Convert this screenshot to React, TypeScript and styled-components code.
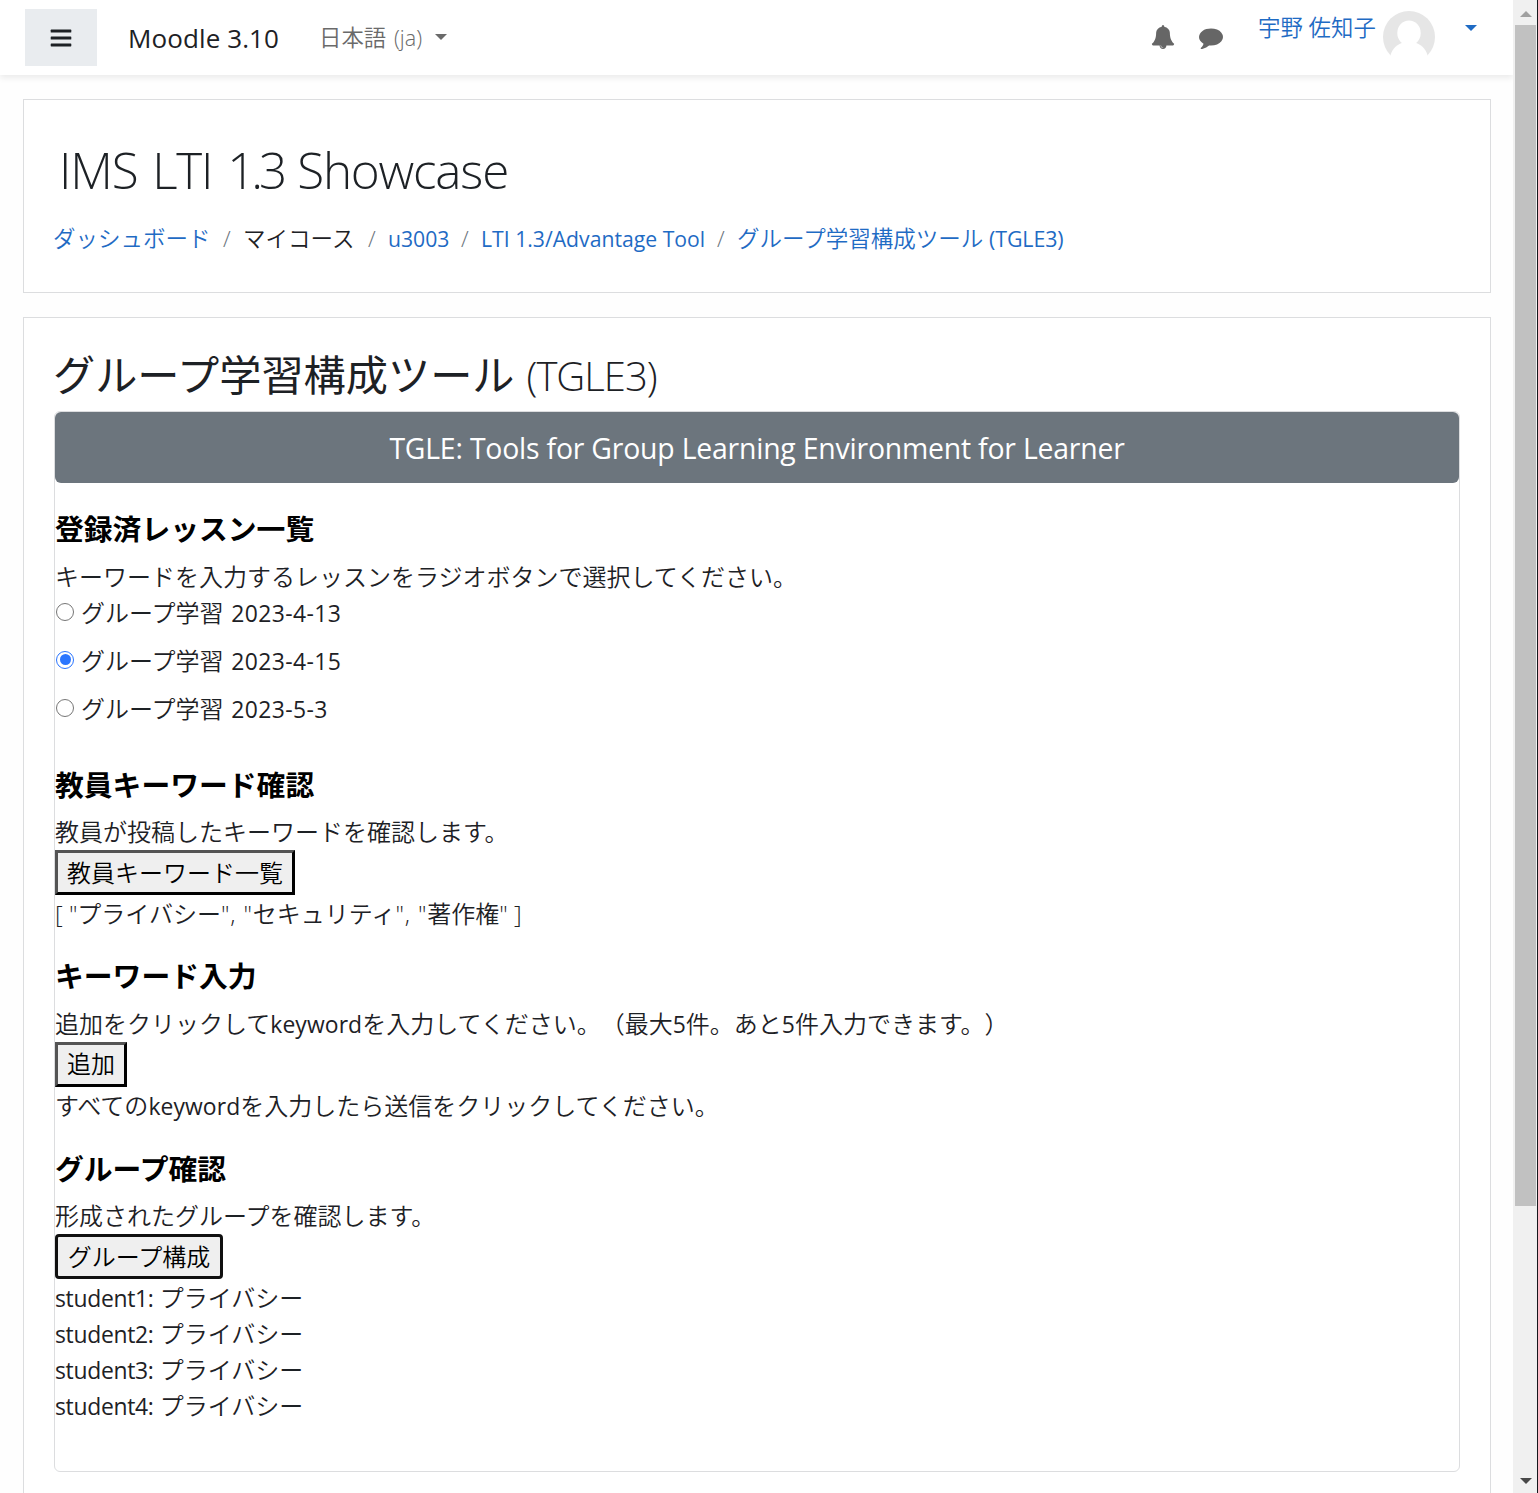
import React from "react";
import styled, { createGlobalStyle } from "styled-components";

const GlobalStyle = createGlobalStyle`
  * { box-sizing: border-box; }
  html, body { margin: 0; padding: 0; overflow: hidden; background: #fff; }
  body {
    font-family: "Open Sans", "Noto Sans CJK JP", sans-serif;
    font-size: 24px;
    font-weight: 350;
    line-height: 36px;
    color: #1d2125;
    text-spacing-trim: space-all;
  }
`;

const Window = styled.div`
  display: flex;
  width: 1538px;
  height: 1493px;
  overflow: hidden;
`;

const Page = styled.div`
  display: flex;
  flex-direction: column;
  width: 1513px;
  height: 1493px;
  overflow: hidden;
  background: #fefefe;
`;

/* Latin runs sit slightly smaller than the Japanese glyphs around them. */
const Latin = styled.span<{ $size?: number; $track?: number; $weight?: number; $space?: number }>`
  font-size: ${(p) => p.$size ?? 22.9}px;
  letter-spacing: ${(p) => p.$track ?? 0}px;
  font-weight: ${(p) => p.$weight ?? 370};
  ${(p) => p.$space !== undefined && `word-spacing: ${p.$space}px;`}
`;

const Navbar = styled.header`
  display: flex;
  flex: none;
  align-items: flex-start;
  height: 75px;
  padding: 9px 36px 0 25px;
  background: #fff;
  box-shadow: 0 3px 6px rgba(0, 0, 0, 0.08);
`;

const DrawerButton = styled.button`
  display: flex;
  align-items: center;
  justify-content: center;
  width: 72px;
  height: 57px;
  padding: 0;
  border: 0;
  background: #e9ecef;
`;

const Brand = styled.a`
  width: 191px;
  margin-left: 31px;
  line-height: 58px;
  white-space: nowrap;
`;

const Language = styled.a`
  display: flex;
  align-items: center;
  height: 58px;
  font-size: 22.4px;
  color: #6a6a6a;
  white-space: pre;
  word-spacing: 2px;
`;

const Caret = styled.span<{ $color: string }>`
  border: 6px solid transparent;
  border-top-color: ${(p) => p.$color};
  border-bottom: 0;
`;

const LanguageCaret = styled(Caret)`
  margin: -3px 0 0 13px;
`;

const NavRight = styled.div`
  display: flex;
  align-items: flex-start;
  margin-left: auto;
`;

const NavIcon = styled.svg`
  width: 24px;
  height: 24px;
  margin: 16px 24px 0 0;
  fill: #666;
`;

const UserMenu = styled.a`
  display: flex;
  align-items: flex-start;
  margin-left: 11px;
  font-size: 22.4px;
  color: #1f6bc4;
  white-space: nowrap;
`;

const UserName = styled.span`
  width: 118px;
  margin: 1px 7px 0 0;
`;

const Avatar = styled.svg`
  width: 52px;
  height: 52px;
  margin: 2px 30px 0 0;
`;

const UserCaret = styled(Caret)`
  margin-top: 16px;
`;

const Content = styled.main`
  display: flex;
  flex-direction: column;
  flex: 1;
  gap: 24px;
  padding: 24px 22px 0 23px;
`;

const HeaderCard = styled.section`
  flex: none;
  height: 194px;
  padding: 38px 29px 0;
  border: 1px solid #dcdddf;
  background: #fff;
`;

const CourseTitle = styled.h1`
  margin: 0 0 18px 6px;
  font-weight: 300;
  line-height: 64px;
`;

const Breadcrumb = styled.nav`
  display: flex;
  font-size: 22.5px;
  line-height: 36px;
  white-space: nowrap;
`;

const Crumb = styled.span<{ $link?: boolean; $width: number }>`
  width: ${(p) => p.$width}px;
  color: ${(p) => (p.$link ? "#1f6bc4" : "#1d2125")};
`;

const Divider = styled.span`
  width: 33px;
  padding-left: 13px;
  color: #6c757d;
`;

const ToolCard = styled.section`
  flex: none;
  height: 1240px;
  padding: 31px 30px 0;
  border: 1px solid #dcdddf;
  background: #fff;
`;

const ToolTitle = styled.h2`
  margin: 0 0 9px -1px;
  font-size: 42.2px;
  font-weight: 400;
  line-height: 52px;
  word-spacing: 1px;
  white-space: nowrap;
`;

const Frame = styled.div`
  height: 1061px;
  border: 1px solid #dcdddf;
  border-radius: 6px;
`;

const Banner = styled.div`
  height: 71px;
  border-radius: 6px;
  background: #6c757d;
  color: #fff;
  line-height: 72px;
  text-align: center;
`;

const Section = styled.section<{ $top: number }>`
  display: flex;
  flex-direction: column;
  align-items: flex-start;
  padding-top: ${(p) => p.$top}px;
  white-space: nowrap;
`;

const SectionTitle = styled.h3`
  margin: 0 0 12px;
  font-size: 28.8px;
  font-weight: 700;
  line-height: 34.5px;
  color: #000;
`;

const Line = styled.div`
  height: 36px;
`;

const RadioRow = styled.label`
  display: flex;
  align-items: center;
  height: 36px;
  margin-bottom: 12px;
  word-spacing: 1.5px;
  white-space: pre;
`;

const LessonName = styled.span`
  margin-top: 2px;
`;

const Radio = styled.input`
  appearance: none;
  display: grid;
  place-items: center;
  width: 18px;
  height: 18px;
  margin: 0 7px 2px 1px;
  border: 1.5px solid #767676;
  border-radius: 50%;
  background: #fff;

  &:checked {
    border-color: #2a75ff;
  }

  &:checked::before {
    content: "";
    width: 11px;
    height: 11px;
    border-radius: 50%;
    background: #2a75ff;
  }
`;

const ActionButton = styled.button<{ $focused?: boolean; $width: number }>`
  width: ${(p) => p.$width}px;
  height: 45px;
  margin-bottom: 1px;
  padding: 0;
  border: 3px ${(p) => (p.$focused ? "solid #101010" : "outset #000")};
  border-radius: ${(p) => (p.$focused ? 4 : 0)}px;
  background: #efefef;
  color: #000;
  font: inherit;
  white-space: nowrap;
`;

const Scrollbar = styled.aside`
  display: flex;
  flex-direction: column;
  align-items: center;
  justify-content: space-between;
  width: 25px;
  height: 1493px;
  padding: 11px 1px 9px 2px;
  border-right: 1px solid #15171c;
  background: #f0f0f0;
`;

const Thumb = styled.div`
  width: 21px;
  height: 1181px;
  margin: 8px 0 auto;
  background: #c1c1c1;
`;

const ArrowUp = styled.span`
  border: 6px solid transparent;
  border-top: 0;
  border-bottom-color: #a0a0a0;
`;

const ArrowDown = styled.span`
  border: 6px solid transparent;
  border-bottom: 0;
  border-top-color: #484848;
`;

const lessons = [
  { name: "グループ学習", date: "2023-4-13" },
  { name: "グループ学習", date: "2023-4-15" },
  { name: "グループ学習", date: "2023-5-3" },
];

const students = ["student1:", "student2:", "student3:", "student4:"];

export default function App() {
  const [selected, setSelected] = React.useState(1);

  return (
    <>
      <GlobalStyle />
      <Window>
        <Page>
          <Navbar>
            <DrawerButton aria-label="menu">
              <svg width="22" height="18" viewBox="0 0 22 18" fill="#1d2125">
                <rect x="0.7" y="0.6" width="20.6" height="3" rx="0.6" />
                <rect x="0.7" y="7.5" width="20.6" height="3" rx="0.6" />
                <rect x="0.7" y="14.4" width="20.6" height="3" rx="0.6" />
              </svg>
            </DrawerButton>
            <Brand>
              <Latin $size={26} $track={0.1}>Moodle 3.10</Latin>
            </Brand>
            <Language>
              日本語 <Latin $size={21.6} $weight={340}>(ja)</Latin>
              <LanguageCaret $color="#6a6a6a" />
            </Language>
            <NavRight>
              <NavIcon viewBox="0 0 1792 1792">
                <path d="M912 1696q0-16-16-16-59 0-101.5-42.5t-42.5-101.5q0-16-16-16t-16 16q0 73 51.5 124.5t124.5 51.5q16 0 16-16zm816-288q0 52-38 90t-90 38h-448q0 106-75 181t-181 75-181-75-75-181h-448q-52 0-90-38t-38-90q50-42 91-88t85-119.5 74.5-158.5 50-206 19.5-260q0-152 117-282.5t307-158.5q-8-19-8-39 0-40 28-68t68-28 68 28 28 68q0 20-8 39 190 28 307 158.5t117 282.5q0 139 19.5 260t50 206 74.5 158.5 85 119.5 91 88z" />
              </NavIcon>
              <NavIcon viewBox="0 0 1792 1792">
                <path d="M1792 896q0 174-120 321.5t-326 233-450 85.5q-70 0-145-8-198 175-460 242-49 14-114 22-17 2-30.5-9t-17.5-29v-1q-3-4-.5-12t2-10 4.5-9.5l6-9 7-8.5 8-9q7-8 31-34.5t34.5-38 31-39.5 32.5-51 27-59 26-76q-157-89-247.5-220t-90.5-281q0-130 71-248.5t191-204.5 286-136.5 348-50.5q244 0 450 85.5t326 233 120 321.5z" />
              </NavIcon>
              <UserMenu>
                <UserName>宇野 佐知子</UserName>
                <Avatar viewBox="0 0 52 52">
                  <circle cx="26" cy="26" r="26" fill="#e6e6e6" />
                  <ellipse cx="26" cy="22" rx="11.7" ry="12.6" fill="#fff" />
                  <path d="M7 46C9 37 15 32.5 21 31.5H31C37 32.5 43 37 45 46V52H7Z" fill="#fff" />
                  <rect y="45" width="52" height="7" fill="#fff" />
                </Avatar>
                <UserCaret $color="#1f6bc4" />
              </UserMenu>
            </NavRight>
          </Navbar>

          <Content>
            <HeaderCard>
              <CourseTitle>
                <Latin $size={49.4} $track={-1.2} $space={3.2} $weight={300}>IMS LTI </Latin>
                <Latin $size={49.4} $track={-4} $space={5} $weight={300}>1.3 </Latin>
                <Latin $size={49.4} $track={-1.2} $weight={300}>Showcase</Latin>
              </CourseTitle>
              <Breadcrumb>
                <Crumb $link $width={157}>ダッシュボード</Crumb>
                <Divider>/</Divider>
                <Crumb $width={112}>マイコース</Crumb>
                <Divider>/</Divider>
                <Crumb $link $width={60}><Latin $size={21.2}>u3003</Latin></Crumb>
                <Divider>/</Divider>
                <Crumb $link $width={223}><Latin $size={21.2}>LTI 1.3/Advantage Tool</Latin></Crumb>
                <Divider>/</Divider>
                <Crumb $link $width={330}>グループ学習構成ツール <Latin $size={21.4} $track={-0.1}>(TGLE3)</Latin></Crumb>
              </Breadcrumb>
            </HeaderCard>

            <ToolCard>
              <ToolTitle>
                グループ学習構成ツール <Latin $size={40} $track={-1} $weight={300}>(TGLE3)</Latin>
              </ToolTitle>
              <Frame>
                <Banner>
                  <Latin $size={28.4} $track={-0.2} $weight={400}>TGLE: Tools for Group Learning Environment for Learner</Latin>
                </Banner>

                <Section $top={29}>
                  <SectionTitle>登録済レッスン一覧</SectionTitle>
                  <Line>キーワードを入力するレッスンをラジオボタンで選択してください。</Line>
                  {lessons.map((lesson, i) => (
                    <RadioRow key={lesson.date}>
                      <Radio type="radio" name="lesson" checked={selected === i} onChange={() => setSelected(i)} />
                      <LessonName>{lesson.name} <Latin $track={0.4}>{lesson.date}</Latin></LessonName>
                    </RadioRow>
                  ))}
                </Section>

                <Section $top={29}>
                  <SectionTitle>教員キーワード確認</SectionTitle>
                  <Line>教員が投稿したキーワードを確認します。</Line>
                  <ActionButton $width={240}>教員キーワード一覧</ActionButton>
                  <Line>
                    [ "プライバシー<Latin $size={24} $track={0.9} $weight={350}>", "</Latin>セキュリティ
                    <Latin $size={24} $track={0.9} $weight={350}>", "</Latin>著作権" ]
                  </Line>
                </Section>

                <Section $top={27}>
                  <SectionTitle>キーワード入力</SectionTitle>
                  <Line>
                    追加をクリックして<Latin $track={0.1}>keyword</Latin>を入力してください。（最大<Latin>5</Latin>件。あと<Latin>5</Latin>件入力できます。）
                  </Line>
                  <ActionButton $width={72}>追加</ActionButton>
                  <Line>すべての<Latin $track={0.1}>keyword</Latin>を入力したら送信をクリックしてください。</Line>
                </Section>

                <Section $top={28}>
                  <SectionTitle>グループ確認</SectionTitle>
                  <Line>形成されたグループを確認します。</Line>
                  <ActionButton $width={168} $focused>グループ構成</ActionButton>
                  {students.map((student) => (
                    <Line key={student}><Latin $track={-0.3}>{student}</Latin> プライバシー</Line>
                  ))}
                </Section>
              </Frame>
            </ToolCard>
          </Content>
        </Page>

        <Scrollbar>
          <ArrowUp />
          <Thumb />
          <ArrowDown />
        </Scrollbar>
      </Window>
    </>
  );
}
